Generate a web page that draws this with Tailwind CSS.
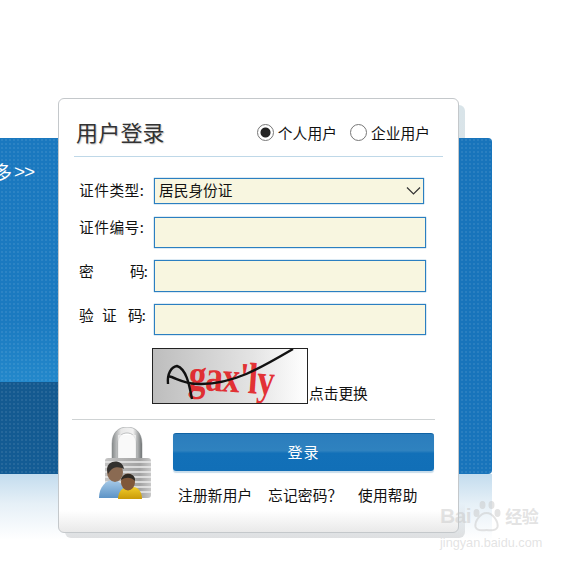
<!DOCTYPE html>
<html lang="zh-CN">
<head>
    <meta charset="UTF-8">
    <meta name="viewport" content="width=device-width, initial-scale=1.0">
    <title>用户登录</title>
    <script src="https://cdn.jsdelivr.net/npm/@tailwindcss/browser@4"></script>
</head>
<body class="bg-white overflow-hidden font-['Noto_Sans_CJK_SC','Liberation_Sans',sans-serif] text-[14.7px] text-[#111]">
    <div class="relative w-[574px] h-[561px] overflow-hidden">
        <!-- card shadow, sits behind the banner -->
        <div class="absolute left-[65px] top-[105px] w-[400px] h-[433px] rounded-md bg-[linear-gradient(#d9e4e9,#dedfe0)]"></div>

        <!-- reflection under the banner -->
        <div class="absolute left-0 top-[474px] w-[492px] h-[66px] bg-[linear-gradient(#c3dcee,#e6f0f7_45%,rgba(255,255,255,0))]"></div>

        <!-- banner -->
        <div class="absolute left-0 top-[138px] w-[492px] h-[336px] rounded-r overflow-hidden bg-[#1874bb] flex flex-col">
            <div class="flex-1 bg-[linear-gradient(#1a78bf,#1b7ac0_75%,#2388cb)] w-[60px] pt-[20px] text-white">
                <div class="-ml-[3px] text-[19px] leading-[28px] flex items-center">
                    <span class="w-[15px] overflow-hidden whitespace-nowrap flex justify-end">多</span>
                    <span class="font-['Liberation_Sans',sans-serif] text-[19px] pl-[2px] tracking-[-1px]">&gt;&gt;</span>
                </div>
            </div>
            <div class="h-[92px] w-[60px] bg-[linear-gradient(#14598f,#135c95)]"></div>
            <div class="absolute inset-0 bg-[radial-gradient(circle,rgba(255,255,255,0.08)_1px,transparent_1.5px)] bg-size-[4px_4px]"></div>
        </div>

        <!-- login card -->
        <div class="absolute left-[58px] top-[98px] w-[401px] h-[435px] rounded-md border border-[#c4c8cb] bg-[linear-gradient(#fff_95%,#e9e9e9)] px-[14px]">
            <div class="flex items-center h-[58px] pt-[11px] border-b border-[#bfd8e8] mr-[1px] ml-[1px]">
                <h1 class="pl-[2px] -mt-[4px] text-[22px] font-normal text-[#333] tracking-[0.2px] [text-shadow:1px_1px_1px_#ccc]">用户登录</h1>
                <label class="ml-[92px] flex items-center gap-[4px] tracking-[0.1px]">
                    <input type="radio" name="kind" checked class="appearance-none w-[17px] h-[17px] rounded-full border border-[#777] bg-white checked:bg-[radial-gradient(circle,#222_4.5px,transparent_5.5px)]">
                    个人用户
                </label>
                <label class="ml-[13px] flex items-center gap-[4px] tracking-[0.1px]">
                    <input type="radio" name="kind" class="appearance-none w-[17px] h-[17px] rounded-full border border-[#777] bg-white">
                    企业用户
                </label>
            </div>

            <form class="flex flex-col pl-[6px]">
                <div class="flex items-center mt-[21px] h-[26px]">
                    <label class="w-[75px] shrink-0 tracking-[0.5px] -mt-[2px]">证件类型:</label>
                    <div class="relative w-[270px]">
                        <select class="appearance-none w-full h-[26px] border border-[#2b7fc1] bg-[#f8f6e0] pl-[4px] pb-[2px] text-[14.7px] leading-[22px] rounded-none shadow-[0_0_1px_#2f80bd]">
                            <option>居民身份证</option>
                        </select>
                        <svg class="absolute right-[3px] top-[8px] pointer-events-none" width="15" height="10" viewBox="0 0 15 10" fill="none" stroke="#333" stroke-width="1.2"><path d="M1 1.5 7.5 8 14 1.5"/></svg>
                    </div>
                </div>
                <div class="flex items-center mt-[13px] h-[31px]">
                    <label class="w-[75px] shrink-0 tracking-[0.5px] -mt-[10px]">证件编号:</label>
                    <input type="text" class="w-[272px] h-[31px] border border-[#2b7fc1] bg-[#f8f6e0] shadow-[0_0_1px_#2f80bd]">
                </div>
                <div class="flex items-center mt-[12px] h-[32px]">
                    <label class="w-[75px] shrink-0 flex -mt-[10px]"><span class="w-[51px]">密</span><span class="tracking-[-1px]">码:</span></label>
                    <input type="text" class="w-[272px] h-[32px] border border-[#2b7fc1] bg-[#f8f6e0] shadow-[0_0_1px_#2f80bd]">
                </div>
                <div class="flex items-center mt-[12px] h-[31px]">
                    <label class="w-[75px] shrink-0 flex -mt-[9px]"><span class="w-[23px]">验</span><span class="w-[26px]">证</span><span class="tracking-[-1px]">码:</span></label>
                    <input type="text" class="w-[272px] h-[31px] border border-[#2b7fc1] bg-[#f8f6e0] shadow-[0_0_1px_#2f80bd]">
                </div>

                <div class="flex items-end mt-[13px] pl-[73px] h-[56px]">
                    <div class="relative w-[156px] h-[56px] shrink-0 border border-[#222] overflow-hidden bg-[linear-gradient(90deg,#bdbdbd,#e4e4e4_65%,#fff)]">
                        <div class="absolute left-[36px] top-[2px] text-[44px] leading-[48px] font-bold font-['Liberation_Serif',serif] text-[#e2191d]/90 tracking-[-1px] whitespace-nowrap origin-left scale-x-[0.8] rotate-[4deg]">gax'ly</div>
                        <svg class="absolute inset-0" width="154" height="54" viewBox="0 0 154 54" fill="none" stroke="#111" stroke-width="2.4">
                            <path d="M15 35C14 25 18 18 24 17 33 20 36 34 39 50"/>
                            <path d="M15 27C24 29 32 36 48 35 80 35 106 20 140 0"/>
                        </svg>
                    </div>
                    <span class="pl-[1px] leading-[20px] mb-[1px] whitespace-nowrap">点击更换</span>
                </div>
            </form>

            <div class="mt-[15px] h-px bg-[#cfd3d4] -ml-px w-[363px]"></div>

            <div class="flex pt-[7px]">
                <!-- lock with two users -->
                <svg class="ml-[25px] shrink-0" width="60" height="76" viewBox="0 0 60 76">
                    <defs>
                        <linearGradient id="shackle" x1="0" x2="1" y1="0" y2="0">
                            <stop offset="0" stop-color="#85898a"/><stop offset=".3" stop-color="#e8e8e8"/><stop offset=".7" stop-color="#f2f2f2"/><stop offset="1" stop-color="#6f7374"/>
                        </linearGradient>
                        <linearGradient id="lockbody" x1="0" x2="1" y1="0" y2="0">
                            <stop offset="0" stop-color="#c4c4c4"/><stop offset=".75" stop-color="#a2a2a2"/><stop offset="1" stop-color="#c8c8c8"/>
                        </linearGradient>
                        <linearGradient id="shirt" x1="0" x2="0" y1="0" y2="1">
                            <stop offset="0" stop-color="#a8cbe8"/><stop offset="1" stop-color="#5c93c6"/>
                        </linearGradient>
                        <linearGradient id="coat" x1="0" x2="0" y1="0" y2="1">
                            <stop offset="0" stop-color="#f1cc2a"/><stop offset="1" stop-color="#c99a08"/>
                        </linearGradient>
                    </defs>
                    <path d="M14 36V17C14 5 21 0 29 0S44 5 44 17V36H38V17C38 9 34 6 29 6S20 9 20 17V36Z" fill="url(#shackle)" stroke="#85898a" stroke-width=".5"/>
                    <path d="M20 8H38V33H20Z" fill="#f7f7f7" opacity=".7"/>
                    <rect x="7" y="31" width="46" height="40" rx="3" fill="url(#lockbody)"/>
                    <path d="M7 35H53M7 40H53M7 45H53M7 50H53M7 55H53M7 60H53M7 65H53" stroke="#ececec" stroke-width="1.6"/>
                    <path d="M1 71C1 60 8 53 15 53C22 53 27 60 27 71Z" fill="url(#shirt)"/>
                    <ellipse cx="17" cy="45" rx="8" ry="10" fill="#8a6a52"/>
                    <path d="M9 43C9 32 25 32 26 42C21 39 14 39 10 47Z" fill="#33312e"/>
                    <path d="M20 72C20 65 24 60 30 60H35C41 60 44 66 44 72Z" fill="url(#coat)"/>
                    <ellipse cx="30" cy="55" rx="7" ry="8.5" fill="#80573a"/>
                    <path d="M23 53C24 45 38 45 37 54C33 50 28 50 23 53Z" fill="#2f2a24"/>
                </svg>
                <div class="ml-[15px] flex flex-col">
                    <button type="button" class="w-[261px] h-[38px] mt-[6px] rounded-[3px] border-t border-[#0f62a3] bg-[linear-gradient(#2b7dbd,#2f82bf_45%,#1270b8_52%,#116fb7)] text-white text-[15px] tracking-[1px] shadow-[0_2px_1px_#c8dcea]">登录</button>
                    <div class="flex mt-[14px] pl-[5px] leading-[20px] whitespace-nowrap tracking-[0.2px]">
                        <a href="#" class="w-[90px]">注册新用户</a>
                        <a href="#" class="w-[90px]">忘记密码？</a>
                        <a href="#">使用帮助</a>
                    </div>
                </div>
            </div>
        </div>

        <!-- watermark -->
        <div class="absolute left-[440px] top-[499px] w-[104px] text-[#c8c8c8]/50 pointer-events-none">
            <div class="flex items-center h-[34px] font-['Liberation_Sans',sans-serif] font-bold text-[21px]">
                <span class="tracking-[-0.5px]">Bai</span>
                <svg class="-ml-[1px]" width="33" height="34" viewBox="0 0 32 34" fill="currentColor">
                    <ellipse cx="6" cy="14" rx="3" ry="4"/><ellipse cx="12" cy="6" rx="3" ry="4"/><ellipse cx="21" cy="6" rx="3" ry="4"/><ellipse cx="27" cy="14" rx="3" ry="4"/>
                    <path d="M16 14C10 14 4 22 5 28 7 33 13 31 16 31S25 33 27 28C28 22 22 14 16 14Z" fill="none" stroke="currentColor" stroke-width="2"/>
                </svg>
                <span class="ml-[2px] text-[17px] font-['Noto_Sans_CJK_SC',sans-serif] tracking-[-0.5px] whitespace-nowrap">经验</span>
            </div>
            <div class="mt-[3px] text-[12.7px] leading-[14px] font-['Liberation_Sans',sans-serif] whitespace-nowrap">jingyan.baidu.com</div>
        </div>
    </div>
</body>
</html>
